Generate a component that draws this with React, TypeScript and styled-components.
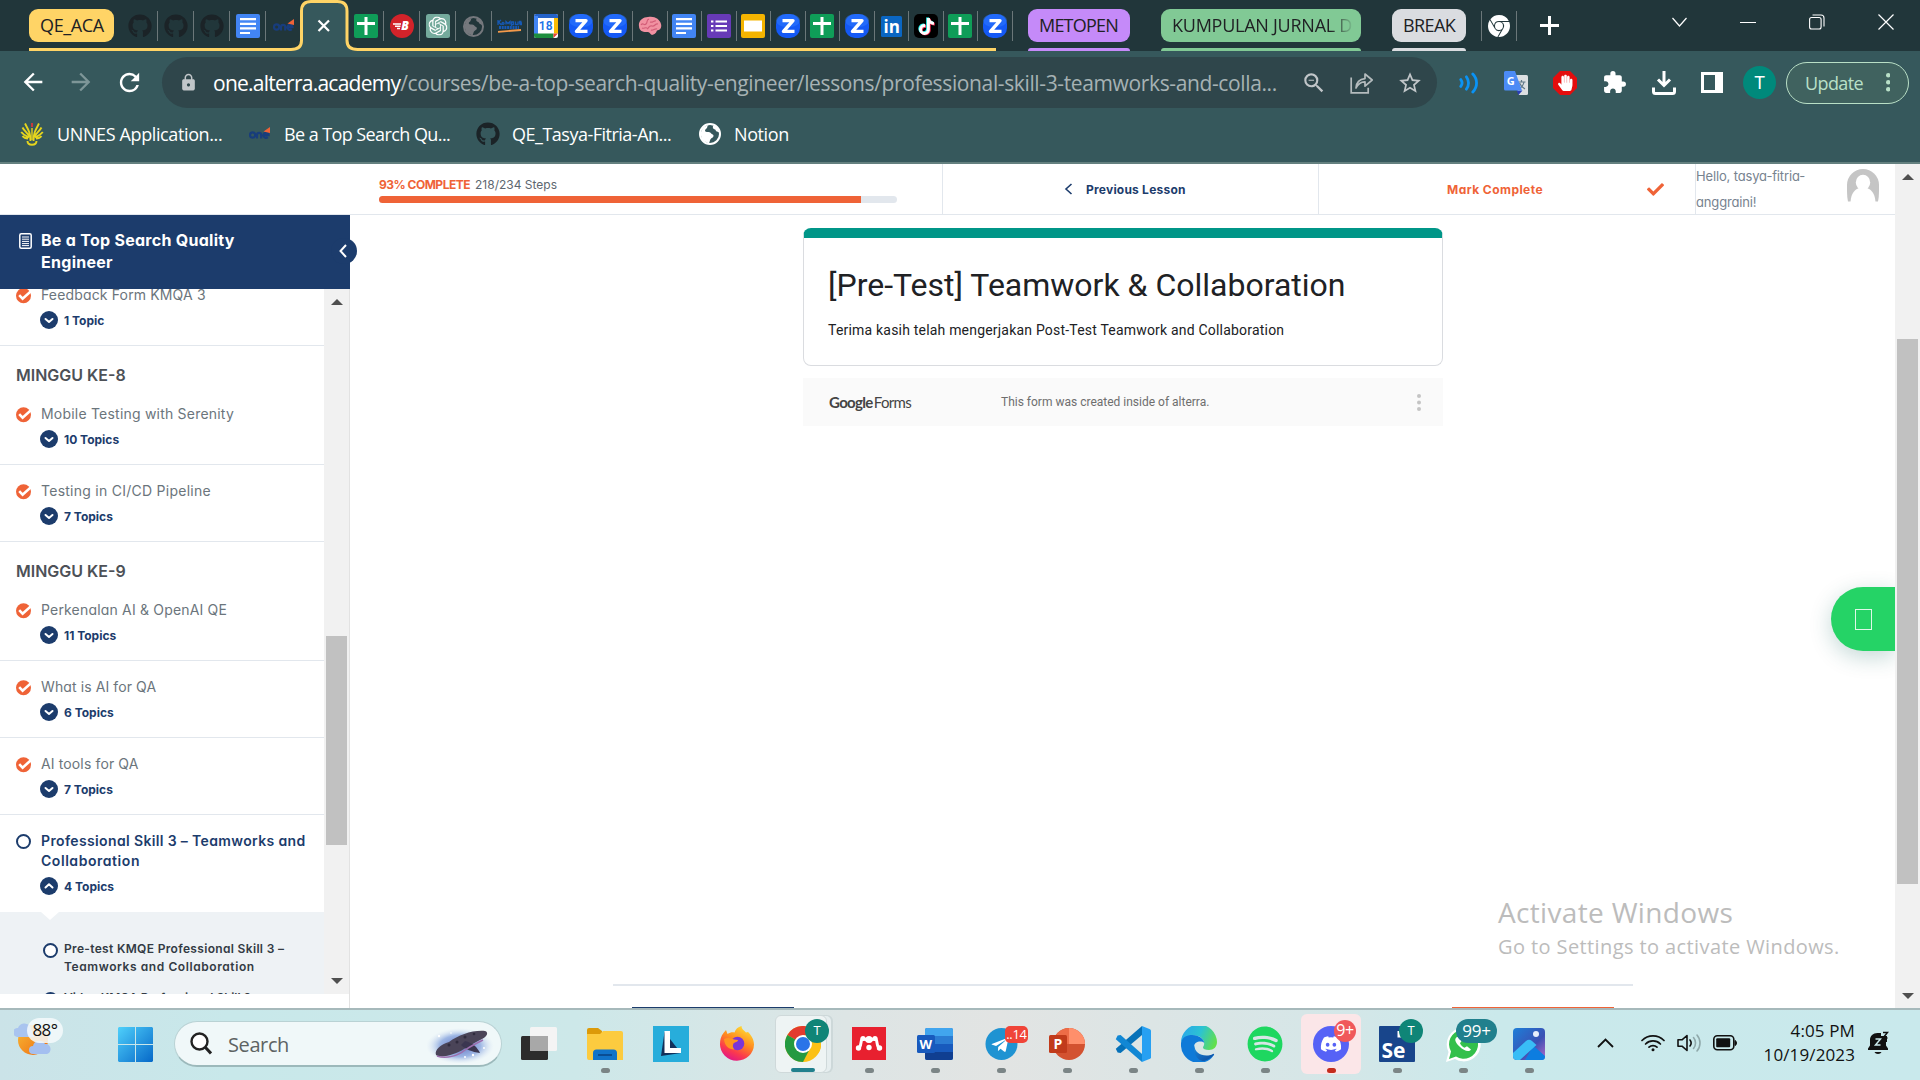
import React from 'react';
import styled, { createGlobalStyle, css } from 'styled-components';
import { FaGithub, FaTiktok, FaSpotify, FaDiscord, FaTelegramPlane, FaHandPaper, FaCheck } from 'react-icons/fa';
import { MdArrowBack, MdArrowForward, MdRefresh, MdLock, MdStarBorder, MdExtension, MdZoomOut } from 'react-icons/md';
import { SiOpenai, SiGooglechrome } from 'react-icons/si';

const ui = `"Open Sans", "Noto Sans", sans-serif`;
const geo = `Inter, "Open Sans", sans-serif`;

const Global = createGlobalStyle`
  *, *::before, *::after { box-sizing: border-box; }
  html, body { margin: 0; padding: 0; overflow: hidden; }
  svg { display: block; flex: none; }
`;

const Screen = styled.div`
  width: 1920px;
  height: 1080px;
  display: flex;
  flex-direction: column;
  overflow: hidden;
  background: #fff;
  font-family: ${ui};
`;

/* ---------- browser tabs ---------- */

const TabStrip = styled.header`
  height: 51px;
  flex: none;
  display: flex;
  align-items: flex-start;
  background: #21363a;
`;

const TabGroup = styled.div`
  position: relative;
  width: 1012px;
  height: 51px;
  display: flex;
  align-items: flex-start;
  padding: 9px 0 0 29px;
`;

const GroupOutline = styled.svg`
  position: absolute;
  inset: 0;
`;

const GroupChip = styled.div<{ $w: number; $bg: string; $ls?: number; $fade?: boolean }>`
  width: ${p => p.$w}px;
  height: 33px;
  flex: none;
  padding: 0 0 0 11px;
  border-radius: 9px;
  background: ${p => p.$bg};
  color: #202124;
  font-size: 18px;
  line-height: 33px;
  letter-spacing: ${p => p.$ls ?? 0}px;
  white-space: nowrap;
  ${p => p.$fade && css`
    span {
      display: block;
      width: 180px;
      overflow: hidden;
      -webkit-mask-image: linear-gradient(90deg, #000 88%, transparent 101%);
      mask-image: linear-gradient(90deg, #000 88%, transparent 101%);
    }
  `}
`;

const CollapsedGroup = styled.div<{ $bg: string; $ml: number }>`
  display: flex;
  flex-direction: column;
  justify-content: space-between;
  height: 51px;
  padding-top: 9px;
  margin-left: ${p => p.$ml}px;
  &::after {
    content: '';
    height: 3px;
    border-radius: 3px 3px 0 0;
    background: ${p => p.$bg};
  }
`;

const Tab = styled.div<{ $w: number; $sep?: boolean; $first?: boolean }>`
  position: relative;
  z-index: 1;
  width: ${p => p.$w}px;
  height: 30px;
  margin: 2px 0 0 ${p => (p.$first ? 8 : 0)}px;
  flex: none;
  display: flex;
  align-items: center;
  justify-content: center;
  border-right: ${p => (p.$sep ? '1px solid #6b7779' : '0')};
`;

const LoneTab = styled(Tab)`
  margin: 11px 0 0 15px;
  border-left: 1px solid #6b7779;
`;

const NewTab = styled.div`
  margin: 16px 0 0 23px;
`;

const WindowButtons = styled.div`
  display: flex;
  align-items: center;
  gap: 53px;
  margin: 14px 26px 0 auto;
`;

/* ---------- toolbar ---------- */

const Toolbar = styled.div`
  height: 63px;
  flex: none;
  display: flex;
  align-items: center;
  padding-left: 19px;
  background: #36585c;
`;

const NavButtons = styled.div`
  width: 143px;
  display: flex;
  gap: 20px;
  color: #fff;
`;

const Omnibox = styled.div`
  width: 1275px;
  height: 51px;
  flex: none;
  display: flex;
  align-items: center;
  padding-left: 17px;
  border-radius: 26px;
  background: #2f464b;
  color: #c1c6c9;
`;

const Url = styled.div`
  width: 1076px;
  margin-left: 15px;
  font-size: 21px;
  line-height: 48px;
  letter-spacing: -0.37px;
  white-space: nowrap;
  color: #a6b2b4;
  b { font-weight: 400; letter-spacing: -0.75px; color: #fff; }
`;

const OmniActions = styled.div`
  display: flex;
  align-items: center;
  gap: 23px;
  margin-left: 12px;
`;

const Extensions = styled.div`
  display: flex;
  align-items: center;
  gap: 25px;
  margin-left: 22px;
`;

const Profile = styled.div`
  width: 33px;
  height: 33px;
  margin-left: 20px;
  border-radius: 50%;
  background: #00897b;
  color: #fff;
  font: 400 18px/33px Roboto, sans-serif;
  text-align: center;
`;

const UpdateButton = styled.div`
  width: 123px;
  height: 42px;
  margin-left: 10px;
  display: flex;
  align-items: center;
  justify-content: space-between;
  padding: 0 18px 0 18px;
  border: 1.5px solid #b9dfc6;
  border-radius: 21px;
  background: #40625f;
  color: #b9e0c8;
  font-size: 18px;
  letter-spacing: -0.6px;
`;

const Bookmarks = styled.div`
  height: 50px;
  flex: none;
  display: flex;
  align-items: center;
  padding: 0 0 8px 20px;
  background: #36585c;
  border-bottom: 2px solid #64807f;
`;

const Bookmark = styled.div<{ $w: number; $gap: number; $ls: number }>`
  width: ${p => p.$w}px;
  display: flex;
  align-items: center;
  gap: ${p => p.$gap}px;
  color: #fff;
  font-size: 18px;
  letter-spacing: ${p => p.$ls}px;
  white-space: nowrap;
`;

/* ---------- web page ---------- */

const Page = styled.div`
  height: 844px;
  flex: none;
  display: flex;
  background: #fff;
`;

const Viewport = styled.div`
  position: relative;
  width: 1895px;
  height: 844px;
  display: flex;
  flex-direction: column;
  font-family: ${geo};
  font-feature-settings: 'cv11';
`;

const CourseBar = styled.div`
  height: 51px;
  flex: none;
  display: flex;
  border-bottom: 1px solid #e2e7ed;
`;

const ProgressCell = styled.div`
  width: 943px;
  padding: 13px 0 0 379px;
  border-right: 1px solid #e2e7ed;
`;

const ProgressText = styled.div`
  height: 16px;
  display: flex;
  gap: 5px;
  line-height: 16px;
  font-size: 12px;
  color: #5d6770;
  b { font-weight: 700; letter-spacing: -0.5px; color: #ef6337; }
`;

const ProgressTrack = styled.div`
  width: 518px;
  height: 7px;
  margin-top: 3px;
  border-radius: 4px;
  overflow: hidden;
  background: #e2e7ed;
  &::before {
    content: '';
    display: block;
    width: 93.1%;
    height: 100%;
    background: #ef6337;
  }
`;

const PrevCell = styled.div`
  width: 376px;
  display: flex;
  align-items: center;
  padding-left: 121px;
  gap: 13px;
  border-right: 1px solid #e2e7ed;
  color: #1c3c6c;
  font-size: 12px;
  font-weight: 700;
  letter-spacing: 0.22px;
`;

const CompleteCell = styled.div`
  width: 377px;
  display: flex;
  align-items: center;
  justify-content: space-between;
  padding: 0 31px 0 128px;
  border-right: 1px solid #e2e7ed;
  color: #ef6337;
  font-size: 12px;
  font-weight: 700;
  letter-spacing: 0.45px;
`;

const UserCell = styled.div`
  flex: 1;
  display: flex;
  justify-content: space-between;
  padding: 0 16px 0 0;
  color: #77838f;
  font-size: 13px;
  line-height: 26px;
  letter-spacing: -0.15px;
  div { margin-top: -1px; white-space: nowrap; }
  svg { margin-top: 5px; }
`;

const Body = styled.div`
  flex: 1;
  display: flex;
  min-height: 0;
`;

const Sidebar = styled.aside`
  width: 350px;
  flex: none;
  display: flex;
  flex-direction: column;
  border-right: 1px solid #e2e2e2;
`;

const CourseHead = styled.div`
  position: relative;
  width: 350px;
  height: 74px;
  flex: none;
  display: flex;
  gap: 9px;
  padding: 14px 0 0 19px;
  background: #1c3c6c;
  color: #fff;
  font-size: 16px;
  font-weight: 700;
  line-height: 22px;
  letter-spacing: 0.28px;
  svg.book { margin-top: 4px; }
`;

const Collapse = styled.div`
  position: absolute;
  left: 331px;
  top: 23px;
  width: 26px;
  height: 26px;
  border-radius: 50%;
  background: #1c3c6c;
  display: flex;
  align-items: center;
  justify-content: center;
  padding-right: 2px;
`;

const Scroller = styled.div`
  height: 705px;
  display: flex;
`;

const LessonList = styled.div`
  width: 324px;
  height: 705px;
  overflow: hidden;
`;

const Lesson = styled.div<{ $open?: boolean; $cut?: boolean }>`
  min-height: ${p => (p.$open ? 97 : 77)}px;
  margin-top: ${p => (p.$cut ? -20 : 0)}px;
  display: grid;
  grid-template-columns: 41px 1fr;
  align-content: start;
  padding-top: 16px;
  border-bottom: ${p => (p.$open ? '0' : '1px solid #e2e7ed')};
  > svg { margin: 3px 0 0 16px; }
`;

const LessonTitle = styled.div<{ $open?: boolean; $ls?: number }>`
  font-size: 14px;
  line-height: 20px;
  font-weight: ${p => (p.$open ? 600 : 400)};
  color: ${p => (p.$open ? '#1c3c6c' : '#6b757c')};
  letter-spacing: ${p => p.$ls ?? 0}px;
  white-space: nowrap;
`;

const TopicCount = styled.div`
  grid-column: 2;
  display: flex;
  align-items: center;
  gap: 6px;
  height: 18px;
  margin: 6px 0 0 -1px;
  color: #1c3c6c;
  font-size: 12px;
  font-weight: 700;
`;

const Week = styled.div`
  height: 42px;
  padding: 19px 0 0 16px;
  font-size: 16px;
  line-height: 20px;
  font-weight: 600;
  color: #4d5157;
`;

const SubTopics = styled.div`
  position: relative;
  padding: 28px 0 0 43px;
  background: #eef2f5;
  &::before {
    content: '';
    position: absolute;
    left: 41px;
    top: 0;
    border: 9px solid transparent;
    border-top: 8px solid #fff;
    border-bottom: 0;
  }
`;

const SubTopic = styled.div`
  height: 49px;
  display: flex;
  gap: 6px;
  font-size: 12px;
  line-height: 18px;
  font-weight: 600;
  color: #333b44;
  white-space: nowrap;
  svg { margin-top: 3px; }
`;

const Line = styled.div<{ $ls: number }>`
  letter-spacing: ${p => p.$ls}px;
`;

const Bar = styled.div<{ $w: number }>`
  width: ${p => p.$w}px;
  height: 100%;
  flex: none;
  display: flex;
  flex-direction: column;
  align-items: center;
  background: #f1f1f1;
`;

const Thumb = styled.div<{ $gap: number; $h: number }>`
  width: 21px;
  height: ${p => p.$h}px;
  margin-top: ${p => p.$gap}px;
  margin-bottom: auto;
  background: #c1c1c1;
`;

const Caret = styled.div<{ $down?: boolean; $m: number }>`
  border: 6px solid transparent;
  ${p => p.$down
    ? css`border-top-color: #4f4f4f; border-bottom: 0; margin-bottom: ${p.$m}px;`
    : css`border-bottom-color: #4f4f4f; border-top: 0; margin-top: ${p.$m}px;`}
`;

const Main = styled.main`
  flex: 1;
  display: flex;
  flex-direction: column;
  padding: 13px 0 0 453px;
`;

const FormCard = styled.div`
  width: 640px;
  height: 138px;
  border: 1px solid #dadce0;
  border-top: 10px solid #009688;
  border-radius: 8px;
  padding: 27px 0 0 24px;
  font-family: Roboto, sans-serif;
  color: #202124;
  h1 { margin: 0; font-size: 32px; line-height: 40px; font-weight: 400; white-space: nowrap; }
  p { margin: 15px 0 0; font-size: 14px; line-height: 20px; letter-spacing: 0.2px; white-space: nowrap; }
`;

const FormFooter = styled.div`
  width: 640px;
  height: 48px;
  margin-top: 12px;
  display: flex;
  align-items: center;
  padding: 0 22px 0 26px;
  background: #fafafa;
  font-family: Roboto, sans-serif;
  color: #6e6e6e;
  font-size: 12px;
  div { width: 172px; font-family: Lato, sans-serif; font-size: 15px; color: #444; letter-spacing: -0.65px; }
  b { font-weight: 700; margin-right: 1px; }
  svg { margin-left: auto; }
`;

const Rule = styled.div`
  width: 1020px;
  height: 2px;
  margin: 558px 0 0 -190px;
  background: #e2e7ed;
`;

const BottomButtons = styled.div`
  width: 982px;
  height: 1px;
  margin: 21px 0 0 -171px;
  display: flex;
  justify-content: space-between;
`;

const ButtonEdge = styled.div<{ $bg: string }>`
  width: 162px;
  background: ${p => p.$bg};
`;

const ChatButton = styled.div`
  position: absolute;
  right: 0;
  top: 423px;
  width: 64px;
  height: 64px;
  padding: 22px 0 0 24px;
  border-radius: 32px 0 0 32px;
  background: #25d366;
  box-shadow: 0 6px 22px rgba(7, 94, 84, 0.24);
  clip-path: inset(-40px 0 -40px -40px);
  &::before {
    content: '';
    display: block;
    width: 17px;
    height: 21px;
    border: 1px solid #dff8e8;
  }
`;

const Watermark = styled.div`
  position: absolute;
  left: 1498px;
  top: 728px;
  font-family: ${ui};
  color: #bcbcbc;
  white-space: nowrap;
  div:first-child { font-size: 28px; line-height: 40px; letter-spacing: 0.33px; }
  div:last-child { font-size: 20px; line-height: 28px; margin-top: 1px; letter-spacing: 0.4px; }
`;

/* ---------- taskbar ---------- */

const Taskbar = styled.footer`
  height: 72px;
  flex: none;
  display: flex;
  border-top: 2px solid #a6b9bb;
  background: linear-gradient(90deg, #cbe3e8 0, #c8e8ea 12%, #cde8e9 30%, #dde5e5 44%, #e2e4e3 52%, #d6e6e7 68%, #cae9eb 78%, #c9e9ec 100%);
`;

const Weather = styled.div`
  width: 118px;
  padding: 4px 0 0 14px;
  position: relative;
  svg { margin-top: 8px; }
`;

const Temp = styled.div`
  position: absolute;
  left: 27px;
  top: 8px;
  width: 36px;
  height: 25px;
  border-radius: 13px;
  background: rgba(246, 250, 251, 0.85);
  font-size: 17px;
  line-height: 24px;
  letter-spacing: -0.5px;
  text-align: center;
  color: #111;
`;

const StartButton = styled.div`
  width: 56px;
  padding-top: 17px;
`;

const Search = styled.div`
  width: 328px;
  height: 46px;
  margin-top: 11px;
  display: flex;
  align-items: center;
  padding-left: 15px;
  border-radius: 23px;
  border: 1px solid #b9d2d4;
  border-bottom: 2px solid #9cb9bb;
  background: #f0f8f9;
  font-size: 20px;
  color: #5d6363;
  letter-spacing: -0.4px;
  span { width: 199px; margin-left: 16px; padding-top: 2px; line-height: 40px; }
`;

const Apps = styled.div`
  display: flex;
  margin-left: 4px;
`;

const AppSlot = styled.div<{ $bg?: string }>`
  position: relative;
  width: 60px;
  height: 60px;
  margin: 4px 3px 0;
  display: flex;
  flex-direction: column;
  align-items: center;
  padding-top: 12px;
  border-radius: 6px;
  background: ${p => p.$bg ?? 'transparent'};
`;

const ActiveApp = styled(AppSlot)`
  width: 52px;
  height: 58px;
  margin: 5px 9px 0 5px;
  padding: 10px 0 0 3px;
  background: #eef4f4;
  border: 1px solid #cfd9da;
  box-shadow: 5px 0 0 -1px #e6eeef, 6px 0 0 0 #cdd8d9;
`;

const Dot = styled.div<{ $w?: number; $c?: string }>`
  width: ${p => p.$w ?? 9}px;
  height: 5px;
  margin-top: 6px;
  border-radius: 3px;
  background: ${p => p.$c ?? '#7b8586'};
`;

const Badge = styled.div<{ $l: number; $t: number; $w: number; $h: number; $bg: string; $fs: number; $r?: number }>`
  position: absolute;
  left: ${p => p.$l}px;
  top: ${p => p.$t}px;
  width: ${p => p.$w}px;
  height: ${p => p.$h}px;
  border-radius: ${p => p.$r ?? 12}px;
  background: ${p => p.$bg};
  color: #fff;
  font-size: ${p => p.$fs}px;
  line-height: ${p => p.$h - 1}px;
  text-align: center;
  letter-spacing: -0.3px;
`;

const Tray = styled.div`
  flex: 1;
  display: flex;
  align-items: center;
  justify-content: flex-end;
  padding: 0 31px 4px 0;
  color: #111;
`;

const TrayIcons = styled.div`
  display: flex;
  align-items: center;
  gap: 12px;
`;

const Clock = styled.div`
  width: 118px;
  text-align: right;
  font-size: 17px;
  line-height: 24px;
  letter-spacing: 0.12px;
  margin-right: 13px;
`;

/* ---------- drawings ---------- */

const Sheets = () => (
  <svg width="24" height="24" viewBox="0 0 24 24"><rect width="24" height="24" rx="2" fill="#0f9d58" /><path d="M12 3v18M3 9.5h18" stroke="#fff" strokeWidth="3" /></svg>
);
const Docs = () => (
  <svg width="24" height="24" viewBox="0 0 24 24"><rect width="24" height="24" rx="2" fill="#4285f4" /><path d="M4 5.2h16M4 9.8h16M4 14.4h16M4 19h10" stroke="#fff" strokeWidth="2.2" /></svg>
);
const Forms = () => (
  <svg width="24" height="24" viewBox="0 0 24 24"><rect width="24" height="24" rx="2" fill="#673ab7" /><path d="M8.5 7.5H20M8.5 12H20M8.5 16.5H20M4 7.5h2.4M4 12h2.4M4 16.5h2.4" stroke="#fff" strokeWidth="2.2" /></svg>
);
const Slides = () => (
  <svg width="24" height="24" viewBox="0 0 24 24"><rect width="24" height="24" rx="2" fill="#f4b400" /><rect x="3" y="6.500" width="18" height="11" fill="#fff" /></svg>
);
const Zen = () => (
  <svg width="24" height="24" viewBox="0 0 24 24"><rect width="24" height="24" rx="10" fill="#1459f5" /><rect width="24" height="13" rx="10" fill="#2f7bff" opacity=".5" /><path d="M6.500 6.600h10.500L7.500 17.400H18.500" fill="none" stroke="#fff" strokeWidth="3.400" strokeLinejoin="round" /></svg>
);
const OneLogo = () => (
  <svg width="22" height="14" viewBox="0 0 22 14"><g fill="none" stroke="#183d7c" strokeWidth="2.200"><circle cx="3.600" cy="8" r="2.600" /><path d="M8 11.500V8a2 2 0 0 1 4.200 0v3.500M14.600 8.200h5a2.600 2.600 0 1 0-.8 1.900" /></g><path d="M14.500 4.500 21 0v6z" fill="#ef6337" /></svg>
);
const BadgeText = styled.text<{ $s: number }>`
  font: italic 800 ${p => p.$s}px "Open Sans", sans-serif;
  fill: #fff;
`;
const Bee = () => (
  <svg width="24" height="24" viewBox="0 0 24 24"><circle cx="12" cy="12" r="12" fill="#d2232a" /><path d="M3 10h8M5 12.300h5.500M7 14.600h3" stroke="#fff" strokeWidth="1.500" /><BadgeText x="11.200" y="16.200" $s={12}>B</BadgeText></svg>
);
const Gpt = () => (
  <svg width="24" height="24" viewBox="0 0 24 24"><rect width="24" height="24" rx="2.500" fill="#74aa9c" /><g transform="translate(2.500 2.500)"><SiOpenai size={19} color="#fff" /></g></svg>
);
const Globe = () => (
  <svg width="21" height="21" viewBox="0 0 22 22"><circle cx="11" cy="11" r="10" fill="#21363a" stroke="#75787d" strokeWidth="2" /><path d="M9 2c-1 2-.4 3-2.300 4.200C5.400 7.200 6 8.800 8 9c2 .1 3.600.2 4.200 1.600.6 1.200 2.400.5 2.300 2.400-.1 1.700-2 1.600-3 3.200-.8 1.400-.6 2.800-1.800 4.300L3 17 1.500 10 4 4.500zM14 3c-.6 1.800.2 3 2 3.400.8.200.6 1.800 2 2l2.400 1.200-1.200-4L16 2.600z" fill="#75787d" /></svg>
);
const NotionGlobe = () => (
  <svg width="22" height="22" viewBox="0 0 22 22"><circle cx="11" cy="11" r="10" fill="#36585c" stroke="#fff" strokeWidth="2" /><path d="M9 2c-1 2-.4 3-2.300 4.200C5.400 7.200 6 8.800 8 9c2 .1 3.600.2 4.200 1.600.6 1.200 2.400.5 2.300 2.400-.1 1.700-2 1.600-3 3.200-.8 1.400-.6 2.800-1.800 4.300L3 17 1.500 10 4 4.500zM14 3c-.6 1.800.2 3 2 3.400.8.200.6 1.800 2 2l2.400 1.200-1.200-4L16 2.600z" fill="#fff" /></svg>
);
const Kampus = () => (
  <svg width="25" height="14" viewBox="0 0 25 14"><path d="M1 1v5M1 3.500 4 1M2 3.500 4.500 6M6 3.500a1 1 0 1 0 .1 0M9 5.500v-3l2 2 2-2v3M14.500 7V3h2v2.500h-2M18.500 2.500v3h2.500v-3M24.500 2.500h-2v1.500h2v1.500h-2" stroke="#1659b5" strokeWidth="1.300" fill="none" /><path d="M2 8.500h20" stroke="#1659b5" strokeWidth="2.800" strokeDasharray="2 .7" /><path d="M1 12.800 24 11" stroke="#f2994a" strokeWidth="1.800" /></svg>
);
const DayText = styled.text`
  font: 600 12px Roboto, sans-serif;
  fill: #1a73e8;
`;
const Calendar = () => (
  <svg width="24" height="24" viewBox="0 0 24 24"><rect width="24" height="24" rx="2" fill="#fff" /><path d="M0 4V2a2 2 0 0 1 2-2h20a2 2 0 0 1 2 2v2z" fill="#2563c9" /><path d="M0 2h4v18H0z" fill="#4285f4" /><path d="M20 4H24v15.500h-4z" fill="#fbbc04" /><path d="M0 19.500h19.500V24H2a2 2 0 0 1-2-2z" fill="#1e8e3e" /><path d="M19.500 24v-4.500H24z" fill="#ea4335" /><DayText x="4.800" y="16.300">18</DayText></svg>
);
const Brain = () => (
  <svg width="24" height="20" viewBox="0 0 24 20"><path d="M1 10C0 5 5 1 10 1c6-1.500 12 2 13 7 1 4-1 6-4 6.500-1 3-3 4-5 4.500-2-.5-2-3-4-3-5 .5-9-1-9-6z" fill="#f191a1" /><path d="M3 9c2-3 3 1 5-1s0-4 3-5M9 13c2-1 2-4 5-3s3-3 6-2M12 6c3 1 4-2 6-1M4 12c2 1 3-1 5 0M13 14c2 1 4-2 6-1" fill="none" stroke="#d35d78" strokeWidth="1.200" /></svg>
);
const InText = styled.text`
  font: 700 17px "Open Sans", sans-serif;
  fill: #fff;
`;
const LinkedIn = () => (
  <svg width="21" height="21" viewBox="0 0 21 21"><rect width="21" height="21" rx="1.500" fill="#0a66c2" /><InText x="2.500" y="17">in</InText></svg>
);
const TikTok = () => (
  <svg width="24" height="24" viewBox="0 0 24 24"><rect width="24" height="24" rx="5" fill="#000" /><g transform="translate(3.200 3.200)"><FaTiktok size={17} color="#25f4ee" /></g><g transform="translate(4.800 4.600)"><FaTiktok size={17} color="#fe2c55" /></g><g transform="translate(4 3.900)"><FaTiktok size={17} color="#fff" /></g></svg>
);
const Share = () => (
  <svg width="24" height="22" viewBox="0 0 24 22" fill="none" stroke="#b4bbbd" strokeWidth="1.700"><path d="M1.200 5.500v15.300h17v-5" /><path d="M6 16c.4-6 3.500-9 9-9.400V2l7.200 6-7.200 6.200V9.800c-4-.1-6.800 1.700-9 6.200z" strokeLinejoin="round" /></svg>
);
const Waves = () => (
  <svg width="20" height="22" viewBox="0 0 20 22" fill="none" stroke="#0a93f5" strokeWidth="2.800" strokeLinecap="round"><path d="M1.800 7.600c1.500 2 1.500 4.800 0 6.800M7.400 4.800c2.800 3.600 2.800 8.800 0 12.400M13.800 2c5 5.200 5 12.800 0 18" /></svg>
);
const GText = styled.text<{ $s?: number }>`
  font: 700 ${p => p.$s ?? 13}px "Open Sans", sans-serif;
  fill: #fff;
`;
const Translate = () => (
  <svg width="24" height="24" viewBox="0 0 24 24"><path d="M9 4h13.500A1.500 1.500 0 0 1 24 5.500v17a1.500 1.500 0 0 1-1.500 1.500H15z" fill="#dcdfe1" /><path d="M13.500 11h8M17.500 9v2M20 11c-.6 3-2.500 5.500-5 7M15.500 12c1 2.500 3 4.500 5.500 6" stroke="#607988" strokeWidth="1.200" fill="none" /><path d="m12.500 19.500 2 4.500 4-4.500z" fill="#2a3fb5" /><path d="M1.500 0H11l7 19.500H1.500A1.500 1.500 0 0 1 0 18V1.500A1.500 1.500 0 0 1 1.500 0z" fill="#4c8bf5" /><GText x="2.800" y="14.200" $s={11}>G</GText></svg>
);
const Stop = () => (
  <svg width="24" height="24" viewBox="0 0 24 24"><path d="M7 0h10l7 7v10l-7 7H7l-7-7V7z" fill="#e40d0d" /><g transform="translate(4 3.500)"><FaHandPaper size={16.500} color="#fff" /></g></svg>
);
const Download = () => (
  <svg width="24" height="24" viewBox="0 0 24 24" fill="none" stroke="#fff" strokeWidth="3"><path d="M12 0v14M6 8.500l6 6 6-6M1.500 16.500v4a2 2 0 0 0 2 2h17a2 2 0 0 0 2-2v-4" /></svg>
);
const Panel = () => (
  <svg width="22" height="21" viewBox="0 0 22 21"><path fillRule="evenodd" d="M0 0h22v21H0zM3 3v15h11V3z" fill="#fff" /></svg>
);
const Unnes = () => (
  <svg width="24" height="24" viewBox="0 0 24 24" fill="none" stroke="#e6d51d" strokeWidth="1.900"><path d="M10.500 19C10.500 11 8.500 8 5 1.500M9.500 15C8 11 5 10 2.500 5.500M9 15.500C6 14 3.500 13 1.200 10M8 16.500c-2 0-4-.5-5.500-2.500M13.500 19c0-8 2-11 5.500-17.500M14.500 15c1.500-4 4.500-5 7-9.500M15 15.500c3-1.500 5.500-2.500 7.800-5.500M16 16.500c2 0 4-.5 5.500-2.500M7.500 19c0 5 9 5 9 0" /><path d="M12 1v4" stroke="#e33" strokeWidth="1.600" /><path d="M12 6v12" strokeWidth="1.400" /></svg>
);
const Vdots = ({ c, r, gap }: { c: string; r: number; gap: number }) => (
  <svg width={r * 2} height={gap * 2 + r * 2} fill={c}>{[0, 1, 2].map(i => <circle key={i} cx={r} cy={r + i * gap} r={r} />)}</svg>
);
const DoneIcon = () => (
  <svg width="16" height="16" viewBox="0 0 16 16"><circle cx="7.500" cy="7.700" r="7.500" fill="#ef6337" /><path d="m3.200 7.200 3.400 3.400 8.600-7.600" fill="none" stroke="#fff" strokeWidth="2.600" /></svg>
);
const OpenIcon = () => (
  <svg width="15" height="15" viewBox="0 0 15 15"><circle cx="7.500" cy="7.500" r="6.500" fill="#fff" stroke="#1c3c6c" strokeWidth="2" /></svg>
);
const Toggle = ({ up }: { up?: boolean }) => (
  <svg width="18" height="18" viewBox="0 0 18 18"><circle cx="9" cy="9" r="9" fill="#1c3c6c" /><path d={up ? 'M5.500 10.500 9 7.300l3.500 3.200' : 'M5.500 8 9 11l3.500-3'} fill="none" stroke="#fff" strokeWidth="2" strokeLinecap="round" strokeLinejoin="round" /></svg>
);
const Avatar = () => (
  <svg width="32" height="33" viewBox="0 0 32 33"><path d="M0 16a16 16 0 0 1 32 0v6q0 6-1 10.500H1Q0 28 0 22z" fill="#c5c5c5" /><ellipse cx="16" cy="13.500" rx="7.200" ry="7.700" fill="#fff" /><path d="M3.500 33C4 24 8 20.500 12 19h8c4 1.500 8 5 8.500 14z" fill="#fff" /></svg>
);

const ChromeIcon = () => (
  <svg width="36" height="36" viewBox="0 0 36 36"><circle cx="18" cy="18" r="18" fill="#fbc116" /><path d="M18 18 2.400 9A18 18 0 0 1 33.600 9z" fill="#e33b2e" /><path d="M2.400 9A18 18 0 0 0 18 36l7-13.500L18 18z" fill="#249a41" /><path d="M18 9h15.600a18 18 0 0 1 0 18l-8.600-5z" fill="#fbc116" /><circle cx="18" cy="18" r="9" fill="#fff" /><circle cx="18" cy="18" r="7" fill="#2a74e8" /></svg>
);
const TaskView = () => (
  <svg width="36" height="36" viewBox="0 0 36 36"><rect y="10" width="27" height="24" rx="1.500" fill="#2c2c2c" /><rect x="9" y="1" width="27" height="24" rx="1.500" fill="#f4f4f4" /><path d="M9 10h18v15H10.500A1.500 1.500 0 0 1 9 23.500z" fill="#a8a8a8" /></svg>
);
const Explorer = () => (
  <svg width="36" height="36" viewBox="0 0 36 36"><path d="M0 4a2 2 0 0 1 2-2h9l4 3v8H0z" fill="#dc9a09" /><path d="M0 8h13l3-3h18a2 2 0 0 1 2 2v27H2a2 2 0 0 1-2-2z" fill="#fccb3f" /><path d="M6 34V27a3.500 3.500 0 0 1 3.500-3.500h17A3.500 3.500 0 0 1 30 27v7z" fill="#1173c9" /><path d="M11 29h14" stroke="#0a4d93" strokeWidth="2" /></svg>
);
const LApp = () => (
  <svg width="36" height="36" viewBox="0 0 36 36"><rect width="36" height="36" fill="#27addb" /><path d="m11.500 6-3.500 24 20-3z" fill="#12305a" /><path d="M11.500 5h5.500v17h11v5H11.500z" fill="#fff" /></svg>
);
const Firefox = () => (
  <svg width="34" height="35" viewBox="0 0 34 35"><defs><linearGradient id="ff" x1=".8" y1="0" x2=".3" y2="1"><stop offset="0" stopColor="#ffe535" /><stop offset=".45" stopColor="#ff8a1f" /><stop offset=".75" stopColor="#fb3a4d" /><stop offset="1" stopColor="#e0158a" /></linearGradient></defs><path d="M3.500 7 6 4l1.500 4C10 6.500 12 6 14.500 6.500 15.500 3 18 1 21.500 0c0 3 2 4 4.500 6.500l2-.5c3.500 3.500 6 7.500 6 12.500A17 16.500 0 0 1 0 18C0 13.500 1.200 10 3.500 7z" fill="url(#ff)" /><circle cx="17.500" cy="17.500" r="6.800" fill="#7b35d8" /><path d="M4 13c4-2 8-.5 10 .5l4 .500c0 2-3.500 2.200-4.500 3.500-1 2-1 4 1 6-6 0-10-4-10.500-10.500z" fill="#ff9420" /></svg>
);
const Mendeley = () => (
  <svg width="34" height="36" viewBox="0 0 34 36"><rect y="1" width="34" height="33" fill="#e8202f" /><path d="M6.500 22c3.500-1 1.500-9 4.500-9.500 2.500 0 3.500 2.500 6 2.500s3.500-2.500 6-2.500c3 .5 1 8.500 4.500 9.500" fill="none" stroke="#fff" strokeWidth="3" /><g fill="#fff"><circle cx="17" cy="13.500" r="3.600" /><circle cx="6.500" cy="22" r="2.700" /><circle cx="17" cy="21.500" r="2.700" /><circle cx="27.500" cy="22" r="2.700" /><circle cx="11" cy="12.500" r="2.600" /><circle cx="23" cy="12.500" r="2.600" /></g></svg>
);
const Word = () => (
  <svg width="36" height="36" viewBox="0 0 36 36"><rect x="8" y="2" width="28" height="32" rx="2" fill="#2b7cd3" /><path d="M8 10V4a2 2 0 0 1 2-2h24a2 2 0 0 1 2 2v6z" fill="#41a5ee" /><path d="M8 18h28v8H8z" fill="#185abd" /><path d="M8 26h28v6a2 2 0 0 1-2 2H10a2 2 0 0 1-2-2z" fill="#103f91" /><rect y="9" width="18" height="18" rx="1.500" fill="#185abd" /><GText x="2.600" y="22.700">W</GText></svg>
);
const Telegram = () => (
  <svg width="33" height="36" viewBox="0 0 33 36"><circle cx="16.500" cy="18" r="16" fill="#1f93d2" /><g transform="translate(5.500 9.500)"><FaTelegramPlane size={19} color="#fff" /></g></svg>
);
const PowerPoint = () => (
  <svg width="36" height="36" viewBox="0 0 36 36"><circle cx="20" cy="18" r="16" fill="#d35230" /><path d="M20 2A16 16 0 0 0 4 18h16z" fill="#ed6c47" /><path d="M20 2a16 16 0 0 1 16 16H20z" fill="#ff8f6b" /><rect y="9" width="18" height="18" rx="1.500" fill="#c13b1b" /><GText x="4.600" y="23" $s={14}>P</GText></svg>
);
const VsCode = () => (
  <svg width="36" height="36" viewBox="0 0 36 36"><path d="m.8 22.800 1.800 3.700 3 .5L27 9V0L.8 22.800z" fill="#0671b8" /><path d="m.8 13.200 1.800-3.700 3-.5L27 28v8z" fill="#1187d4" /><path d="M27 0l8 3.200q1 .5 1 1.600v26.400q0 1.100-1 1.600L27 36z" fill="#27a0f2" /></svg>
);
const Edge = () => (
  <svg width="36" height="36" viewBox="0 0 36 36"><defs><linearGradient id="e1" x1="0" y1=".3" x2="1" y2=".6"><stop offset="0" stopColor="#2aa8ea" /><stop offset=".5" stopColor="#2cc3d2" /><stop offset="1" stopColor="#63e04a" /></linearGradient><linearGradient id="e2" x1="0" y1="0" x2="1" y2="1"><stop offset="0" stopColor="#1b8be0" /><stop offset="1" stopColor="#0c479b" /></linearGradient></defs><path d="M0 17A18 18 0 0 1 36 16c0 5-3.500 8-8 8-4 0-6-1.200-6-2.500 0-1 1.200-1.500 1.200-4C23 13 19 9.500 12.500 9.500 6 9.500 1 13 0 17z" fill="url(#e1)" /><path d="M0 17C1 11 6 9 11 9c7 0 12 4 12.200 8C21 14.500 13 15 13 21c0 6.500 7 9.500 12 9.500 4 0 7-2.500 7.500-2.500.7 0 .8.500.3 1.200A18 18 0 0 1 0 18z" fill="#0f7ad8" /><path d="M13.500 19C11.500 24 15 35 23 35c4-1 7.500-3.500 9.800-6.300.5-.8.300-1.200-.5-.8C24 32 13 28 13.500 19z" fill="url(#e2)" /></svg>
);
const Discord = () => (
  <svg width="36" height="36" viewBox="0 0 36 36"><circle cx="18" cy="18" r="18" fill="#5662f6" /><g transform="translate(7 7)"><FaDiscord size={22} color="#fff" /></g></svg>
);
const Selenium = () => (
  <svg width="36" height="36" viewBox="0 0 36 36"><rect width="36" height="36" rx="1" fill="#18458b" /><path d="M18.500 5v6.500h6V10h-3V5z" fill="#fff" /><GText x="2.500" y="31.500" $s={21}>Se</GText></svg>
);
const Whatsapp = () => (
  <svg width="36" height="36" viewBox="0 0 36 36"><path d="M1 36 3.500 26A17 17 0 1 1 10 33z" fill="#fff" /><path d="m4 33 2-7.500A14.500 14.500 0 1 1 11 30.600z" fill="#33c04c" /><path d="M12 11c-3 2-2 5 2.500 9.500S24 26.500 26 23.500l-4-3.300-2.500 1.500c-2-1-3.500-2.500-4.500-4.500l1.500-2.200L13.700 11z" fill="#fff" /></svg>
);
const Photos = () => (
  <svg width="32" height="36" viewBox="0 0 32 36"><defs><linearGradient id="ph" x1="0" y1="0" x2="1" y2="1"><stop offset="0" stopColor="#1d7fd8" /><stop offset=".6" stopColor="#3b50b4" /><stop offset="1" stopColor="#b668c9" /></linearGradient></defs><rect y="2" width="32" height="32" rx="4" fill="url(#ph)" /><path d="M12 34 19 22q2-2 4 0l9 8v1a3 3 0 0 1-3 3z" fill="#0d7de0" /><path d="M0 27 13 15q3-2.500 6 0l4.500 4L7 34H4a4 4 0 0 1-4-4z" fill="#39bdf6" /><circle cx="23" cy="8" r="3" fill="#e8eefc" /></svg>
);
const WeatherIcon = () => (
  <svg width="38" height="36" viewBox="0 0 38 36"><defs><linearGradient id="sun" x1="0" y1="0" x2="1" y2="1"><stop offset="0" stopColor="#f8bb35" /><stop offset="1" stopColor="#ee6a10" /></linearGradient></defs><circle cx="19" cy="18" r="15" fill="url(#sun)" /><path d="M3 15a4.500 4.500 0 0 1 1-9 7 7 0 0 1 12-2l4 11z" fill="#a9c4ef" /><path d="M19 32a4 4 0 0 1 0-8 6.500 6.500 0 0 1 12-2c3-.5 5.500 2 5.500 5s-2 5-4.500 5z" fill="#a4bff0" /></svg>
);
const WinLogo = () => (
  <svg width="35" height="35" viewBox="0 0 35 35"><defs><linearGradient id="w" x1="0" y1="0" x2="1" y2="1"><stop offset="0" stopColor="#4fd0fb" /><stop offset="1" stopColor="#0668c8" /></linearGradient></defs><path d="M1 0h16v17H0V1zM18 0h16l1 1v16H18zM0 18h17v17H1l-1-1zM18 18h17v16l-1 1H18z" fill="url(#w)" /></svg>
);
const Whale = () => (
  <svg width="68" height="38" viewBox="0 0 68 38"><defs><radialGradient id="sea"><stop offset="0" stopColor="#6376c4" /><stop offset=".6" stopColor="#9db6e4" /><stop offset="1" stopColor="#dfeaf5" stopOpacity="0" /></radialGradient></defs><ellipse cx="33" cy="21" rx="34" ry="18" fill="url(#sea)" /><path d="M9 30c-2-5 5-11 13-13C32 10 45 5 58 6c4 1 2 6-3 8-7 3-12 7-18 10-8 5-22 10-28 6z" fill="#4a4458" /><path d="M38 16c8 2 12 6 15 12-8-1-15-4-19-8z" fill="#3b3650" /><path d="M10 31c9 3 21 0 28-6 6-4 12-7 18-10" stroke="#9d6fae" strokeWidth="1.500" fill="none" /><g fill="#2f2b3d"><circle cx="22" cy="20" r="1.500" /><circle cx="30" cy="17" r="1.500" /><circle cx="38" cy="12" r="1.500" /><circle cx="47" cy="9" r="1.300" /></g><g fill="#fff"><circle cx="46" cy="30" r="1.200" /><circle cx="38" cy="32" r="1" /><circle cx="12" cy="11" r="1.200" /><circle cx="57" cy="23" r="1" /><circle cx="24" cy="8" r=".8" /></g></svg>
);
const Wifi = () => (
  <svg width="24" height="18" viewBox="0 0 24 18" fill="none" stroke="#111" strokeWidth="1.700" strokeLinecap="round"><path d="M1 6.500a15.500 15.500 0 0 1 22 0M4.600 10a10.500 10.500 0 0 1 14.800 0M8 13.200a5.700 5.700 0 0 1 8 0" /><circle cx="12" cy="15.800" r="1.500" fill="#111" stroke="none" /></svg>
);
const Speaker = () => (
  <svg width="24" height="20" viewBox="0 0 24 20" fill="none" stroke="#111" strokeWidth="1.600" strokeLinejoin="round" strokeLinecap="round"><path d="M1 6.800v6.400h4l5 4.300v-15l-5 4.300z" /><path d="M13 7c1.400 1.800 1.400 4.200 0 6" /><path d="M16.500 4.500c2.700 3.200 2.700 7.800 0 11M20 2c4 4.600 4 11.400 0 16" stroke="#8fa8aa" /></svg>
);
const Battery = () => (
  <svg width="24" height="16" viewBox="0 0 24 16"><rect x=".8" y=".8" width="20" height="14" rx="3.500" fill="none" stroke="#111" strokeWidth="1.600" /><rect x="3.200" y="3.300" width="14" height="9" rx="1" fill="#111" /><path d="M22 5.500q1.500.5 1.500 2.500T22 10.500z" fill="#111" stroke="#111" /></svg>
);
const Bell = () => (
  <svg width="21" height="24" viewBox="0 0 21 24"><path d="M0 19v-1.500l2-3V9c0-4 3-7 7.500-7H13v3h6v6h-1v3.500l2 3V19zM6.500 21h7c-1 2.500-6 2.500-7 0z" fill="#111" /><path d="M7.500 8h5l-5 6h5" fill="none" stroke="#cae9eb" strokeWidth="1.500" /><path d="M15 1.500h4.500L15 7h4.500" fill="none" stroke="#111" strokeWidth="1.500" /></svg>
);

/* ---------- data ---------- */

const lead = [
  <FaGithub size={24} color="#1b2327" />, <FaGithub size={24} color="#1b2327" />, <FaGithub size={24} color="#1b2327" />, <Docs />,
];
const mid = [<Sheets />, <Bee />, <Gpt />, <Globe />, <Kampus />, <Calendar />];
const tail = [
  <Zen />, <Zen />, <Brain />, <Docs />, <Forms />, <Slides />, <Zen />, <Sheets />, <Zen />, <LinkedIn />, <TikTok />, <Sheets />, <Zen />,
];

type Row = { week?: string; title?: string; topics?: string; cut?: boolean; ls?: number };
const rows: Row[] = [
  { title: 'Feedback Form KMQA 3', topics: '1 Topic', cut: true, ls: 0.15 },
  { week: 'MINGGU KE-8' },
  { title: 'Mobile Testing with Serenity', topics: '10 Topics', ls: 0.21 },
  { title: 'Testing in CI/CD Pipeline', topics: '7 Topics', ls: 0.26 },
  { week: 'MINGGU KE-9' },
  { title: 'Perkenalan AI & OpenAI QE', topics: '11 Topics', ls: 0.18 },
  { title: 'What is AI for QA', topics: '6 Topics', ls: 0.1 },
  { title: 'AI tools for QA', topics: '7 Topics', ls: 0.13 },
];

type AppEntry = { icon: React.ReactNode; dot?: boolean; badge?: React.ReactNode; bg?: string; active?: boolean; dotColor?: string };
const apps: AppEntry[] = [
  { icon: <TaskView /> },
  { icon: <Explorer />, dot: true },
  { icon: <LApp /> },
  { icon: <Firefox /> },
  { icon: <ChromeIcon />, active: true, badge: <Badge $l={29} $t={3} $w={24} $h={24} $bg="#0f8577" $fs={13}>T</Badge> },
  { icon: <Mendeley />, dot: true },
  { icon: <Word />, dot: true },
  { icon: <Telegram />, dot: true, badge: <Badge $l={34} $t={12} $w={23} $h={17} $bg="#f04438" $fs={13} $r={5}>..14</Badge> },
  { icon: <PowerPoint />, dot: true },
  { icon: <VsCode />, dot: true },
  { icon: <Edge />, dot: true },
  { icon: <FaSpotify size={36} color="#1ed760" />, dot: true },
  { icon: <Discord />, dot: true, bg: '#fbe6e8', dotColor: '#c42b1c', badge: <Badge $l={33} $t={6} $w={22} $h={22} $bg="#f0585b" $fs={16}>9+</Badge> },
  { icon: <Selenium />, dot: true, badge: <Badge $l={32} $t={5} $w={24} $h={24} $bg="#0f8577" $fs={13}>T</Badge> },
  { icon: <Whatsapp />, dot: true, badge: <Badge $l={23} $t={5} $w={41} $h={24} $bg="#21808d" $fs={17}>99+</Badge> },
  { icon: <Photos />, dot: true },
];

export default function App() {
  return (
    <Screen>
      <Global />
      <TabStrip>
        <TabGroup>
          <GroupOutline width="1012" height="51" viewBox="0 0 1012 51">
            <path d="M290 51q11.500-1 11.500-10V11q0-9.500 9.500-9.500h26.500q9.500 0 9.500 9.500v30q0 9 11 10z" fill="#36585c" />
            <path d="M29 49.500H291q10.500 0 10.500-9V11q0-9.500 9.500-9.500h26.500q9.500 0 9.500 9.500v29.500q0 9 10.500 9H996" fill="none" stroke="#ffd466" strokeWidth="3" />
            <path d="m318.500 20.500 10.500 10.500m0-10.500-10.500 10.500" stroke="#fff" strokeWidth="2.200" />
          </GroupOutline>
          <GroupChip $w={85} $bg="#ffd466" $ls={-0.35}>QE_ACA</GroupChip>
          {lead.map((icon, i) => <Tab key={i} $w={36} $sep $first={i === 0}>{icon}</Tab>)}
          <Tab $w={36}><OneLogo /></Tab>
          <Tab $w={46} />
          {mid.map((icon, i) => <Tab key={i} $w={36} $sep>{icon}</Tab>)}
          {tail.map((icon, i) => <Tab key={i} $w={34.5} $sep>{icon}</Tab>)}
        </TabGroup>
        <CollapsedGroup $ml={16} $bg="#c58af9"><GroupChip $w={102} $bg="#c58af9" $ls={-0.8}>METOPEN</GroupChip></CollapsedGroup>
        <CollapsedGroup $ml={31} $bg="#81c995"><GroupChip $w={200} $bg="#81c995" $ls={-0.25} $fade><span>KUMPULAN JURNAL D</span></GroupChip></CollapsedGroup>
        <CollapsedGroup $ml={31} $bg="#dadce0"><GroupChip $w={74} $bg="#dadce0" $ls={-0.6}>BREAK</GroupChip></CollapsedGroup>
        <LoneTab $w={36} $sep><SiGooglechrome size={22} color="#fff" /></LoneTab>
        <NewTab><svg width="19" height="19"><path d="M9.500 0v19M0 9.500h19" stroke="#fff" strokeWidth="3" /></svg></NewTab>
        <WindowButtons>
          <svg width="15" height="16"><path d="m.5 4 7 8 7-8" fill="none" stroke="#fff" strokeWidth="1.200" /></svg>
          <svg width="16" height="16"><path d="M0 8.500h16" stroke="#fff" /></svg>
          <svg width="16" height="16" fill="none" stroke="#fff" strokeWidth="1.100"><rect x=".6" y="3.500" width="11.500" height="11.500" rx="2" /><path d="M3.500 1h8.500q3 0 3 3v8.500" /></svg>
          <svg width="16" height="16"><path d="m.5.500 15 15m0-15-15 15" stroke="#fff" strokeWidth="1.200" /></svg>
        </WindowButtons>
      </TabStrip>

      <Toolbar>
        <NavButtons>
          <MdArrowBack size={28} /><MdArrowForward size={28} color="#7e9698" /><MdRefresh size={29} />
        </NavButtons>
        <Omnibox>
          <MdLock size={19} />
          <Url><b>one.alterra.academy</b>/courses/be-a-top-search-quality-engineer/lessons/professional-skill-3-teamworks-and-colla...</Url>
          <OmniActions><MdZoomOut size={26} /><Share /><MdStarBorder size={26} /></OmniActions>
        </Omnibox>
        <Extensions><Waves /><Translate /><Stop /><MdExtension size={25} color="#fff" /><Download /><Panel /></Extensions>
        <Profile>T</Profile>
        <UpdateButton>Update<Vdots c="#b9e0c8" r={2.2} gap={7} /></UpdateButton>
      </Toolbar>
      <Bookmarks>
        <Bookmark $w={229} $gap={13} $ls={-0.38}><Unnes />UNNES Application...</Bookmark>
        <Bookmark $w={227} $gap={13} $ls={-0.58}><OneLogo />Be a Top Search Qu...</Bookmark>
        <Bookmark $w={223} $gap={12} $ls={-0.5}><FaGithub size={24} color="#1b2327" />QE_Tasya-Fitria-An...</Bookmark>
        <Bookmark $w={120} $gap={13} $ls={-0.4}><NotionGlobe />Notion</Bookmark>
      </Bookmarks>

      <Page>
        <Viewport>
          <CourseBar>
            <ProgressCell>
              <ProgressText><b>93% COMPLETE</b>218/234 Steps</ProgressText>
              <ProgressTrack />
            </ProgressCell>
            <PrevCell><svg width="9" height="12"><path d="M7.500 1 2 6l5.500 5" fill="none" stroke="#1c3c6c" strokeWidth="1.600" /></svg><span>Previous Lesson</span></PrevCell>
            <CompleteCell><span>Mark Complete</span><FaCheck size={17} /></CompleteCell>
            <UserCell><div>Hello, tasya-fitria-<br />anggraini!</div><Avatar /></UserCell>
          </CourseBar>
          <Body>
            <Sidebar>
              <CourseHead>
                <svg className="book" width="13" height="16" viewBox="0 0 13 16"><rect x=".8" y=".8" width="11.400" height="14.400" rx="1.500" fill="none" stroke="#fff" strokeWidth="1.500" /><path d="M3 4h7M3 6.200h7M3 8.400h7M3 10.600h7M3 12.600h7" stroke="#fff" /></svg>
                <div>Be a Top Search Quality<br />Engineer</div>
                <Collapse><svg width="8" height="14"><path d="M7 1 1.500 7 7 13" fill="none" stroke="#fff" strokeWidth="2" /></svg></Collapse>
              </CourseHead>
              <Scroller>
                <LessonList>
                  {rows.map((r, i) => r.week ? <Week key={i}>{r.week}</Week> : (
                    <Lesson key={i} $cut={r.cut}>
                      <DoneIcon /><LessonTitle $ls={r.ls}>{r.title}</LessonTitle>
                      <TopicCount><Toggle />{r.topics}</TopicCount>
                    </Lesson>
                  ))}
                  <Lesson $open>
                    <OpenIcon />
                    <LessonTitle $open>
                      <Line $ls={0.36}>Professional Skill 3 – Teamworks and</Line>
                      <Line $ls={0.55}>Collaboration</Line>
                    </LessonTitle>
                    <TopicCount><Toggle up />4 Topics</TopicCount>
                  </Lesson>
                  <SubTopics>
                    <SubTopic>
                      <OpenIcon />
                      <div>
                        <Line $ls={0.33}>Pre-test KMQE Professional Skill 3 –</Line>
                        <Line $ls={0.58}>Teamworks and Collaboration</Line>
                      </div>
                    </SubTopic>
                    <SubTopic><OpenIcon /><Line $ls={0}>Video KMQA Professional Skill 3</Line></SubTopic>
                  </SubTopics>
                </LessonList>
                <Bar $w={25}><Caret $m={10} /><Thumb $gap={331} $h={209} /><Caret $down $m={10} /></Bar>
              </Scroller>
            </Sidebar>
            <Main>
              <FormCard>
                <h1>[Pre-Test] Teamwork &amp; Collaboration</h1>
                <p>Terima kasih telah mengerjakan Post-Test Teamwork and Collaboration</p>
              </FormCard>
              <FormFooter><div><b>Google</b>Forms</div>This form was created inside of alterra.<Vdots c="#c4c4c4" r={2} gap={6.5} /></FormFooter>
              <Rule />
              <BottomButtons><ButtonEdge $bg="#1c3c6c" /><ButtonEdge $bg="#ef6337" /></BottomButtons>
            </Main>
          </Body>
          <ChatButton />
          <Watermark><div>Activate Windows</div><div>Go to Settings to activate Windows.</div></Watermark>
        </Viewport>
        <Bar $w={25}><Caret $m={10} /><Thumb $gap={159} $h={545} /><Caret $down $m={9} /></Bar>
      </Page>

      <Taskbar>
        <Weather><WeatherIcon /><Temp>88°</Temp></Weather>
        <StartButton><WinLogo /></StartButton>
        <Search>
          <svg width="22" height="23"><circle cx="9.500" cy="9.500" r="8" fill="#fff" stroke="#222" strokeWidth="2.400" /><path d="m15.500 15.500 5.500 6" stroke="#222" strokeWidth="3" /></svg>
          <span>Search</span><Whale />
        </Search>
        <Apps>
          {apps.map((a, i) => a.active
            ? <ActiveApp key={i}>{a.icon}<Dot $w={24} $c="#21808d" />{a.badge}</ActiveApp>
            : <AppSlot key={i} $bg={a.bg}>{a.icon}{a.dot && <Dot $c={a.dotColor} />}{a.badge}</AppSlot>)}
        </Apps>
        <Tray>
          <TrayIcons>
            <svg width="32" height="10"><path d="m1 9 7.500-7.500L16 9" fill="none" stroke="#111" strokeWidth="1.800" /></svg>
            <Wifi /><Speaker /><Battery />
          </TrayIcons>
          <Clock>4:05 PM<br />10/19/2023</Clock>
          <Bell />
        </Tray>
      </Taskbar>
    </Screen>
  );
}
